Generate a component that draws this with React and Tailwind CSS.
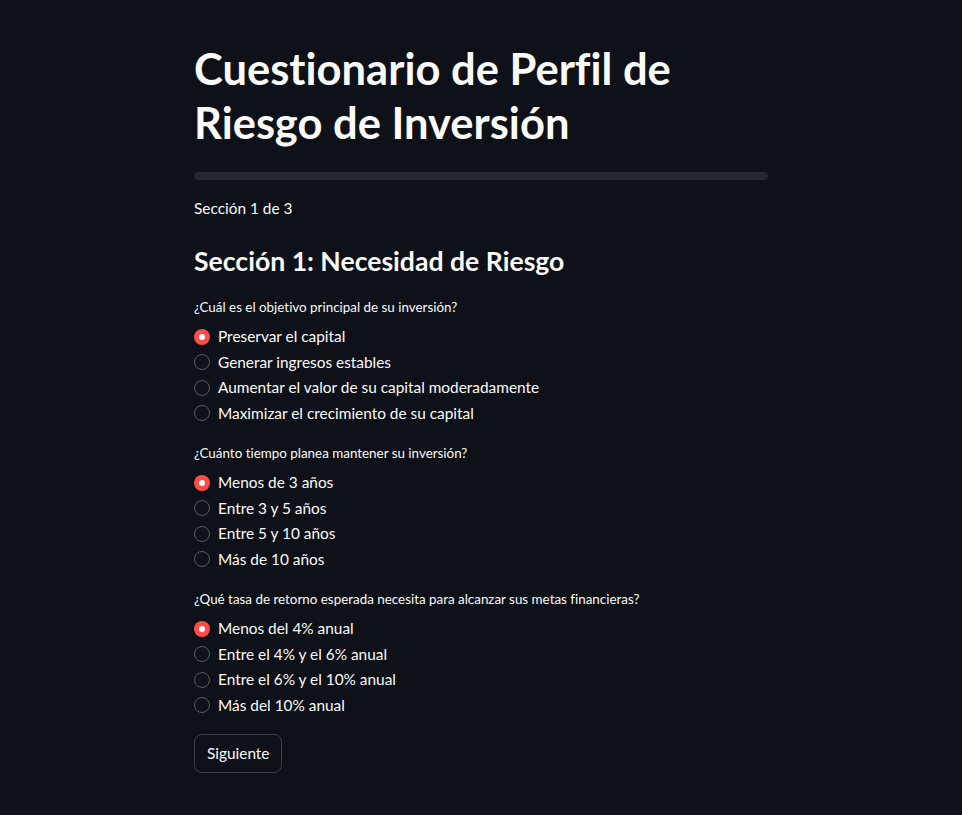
import { useState } from "react";

const questions = [
  {
    label: "¿Cuál es el objetivo principal de su inversión?",
    options: [
      "Preservar el capital",
      "Generar ingresos estables",
      "Aumentar el valor de su capital moderadamente",
      "Maximizar el crecimiento de su capital",
    ],
  },
  {
    label: "¿Cuánto tiempo planea mantener su inversión?",
    options: ["Menos de 3 años", "Entre 3 y 5 años", "Entre 5 y 10 años", "Más de 10 años"],
  },
  {
    label: "¿Qué tasa de retorno esperada necesita para alcanzar sus metas financieras?",
    options: [
      "Menos del 4% anual",
      "Entre el 4% y el 6% anual",
      "Entre el 6% y el 10% anual",
      "Más del 10% anual",
    ],
  },
];

function RadioGroup({ label, options, value, onChange, first }) {
  return (
    <div className={first ? "mt-[18px]" : "mt-[17px]"}>
      <div className="h-5 flex items-center text-[13.4px] text-[#fafafa]">{label}</div>
      <div className="mt-[7px] flex flex-col">
        {options.map((opt, i) => (
          <label
            key={opt}
            className="h-[25.5px] flex items-center gap-2 cursor-pointer"
            onClick={() => onChange(i)}
          >
            {value === i ? (
              <span className="w-4 h-4 rounded-full bg-[#ff4b4b] flex items-center justify-center">
                <span className="w-[6px] h-[6px] rounded-full bg-white" />
              </span>
            ) : (
              <span className="w-4 h-4 rounded-full border border-[#585a62]" />
            )}
            <span className="text-[15.4px] text-[#fafafa]">{opt}</span>
          </label>
        ))}
      </div>
    </div>
  );
}

export default function App() {
  const [answers, setAnswers] = useState([0, 0, 0]);

  return (
    <div
      className="min-h-screen bg-[#0e1117] text-[#fafafa] [font-variant-ligatures:none]"
      style={{ fontFamily: "Lato, 'Noto Sans', sans-serif" }}
    >
      <div className="w-[574px] mx-auto pt-[41px] pb-10">
        <h1 className="text-[43.5px] leading-[54px] font-bold">
          Cuestionario de Perfil de
          <br />
          Riesgo de Inversión
        </h1>

        <div className="mt-[23px] h-2 rounded-full bg-[#262730]" />

        <p className="mt-[17px] h-6 flex items-center text-[15.4px]">Sección 1 de 3</p>

        <h2 className="mt-[24px] h-[34px] flex items-center text-[26.6px] font-bold">
          Sección 1: Necesidad de Riesgo
        </h2>

        {questions.map((q, qi) => (
          <RadioGroup
            key={qi}
            first={qi === 0}
            label={q.label}
            options={q.options}
            value={answers[qi]}
            onChange={(i) => setAnswers(answers.map((a, j) => (j === qi ? i : a)))}
          />
        ))}

        <button className="mt-[16px] h-[39px] px-3 rounded-lg border border-[#3d3f47] bg-[#0e1117] text-[15.4px] text-[#fafafa] hover:border-[#ff4b4b] hover:text-[#ff4b4b]">
          Siguiente
        </button>
      </div>
    </div>
  );
}
